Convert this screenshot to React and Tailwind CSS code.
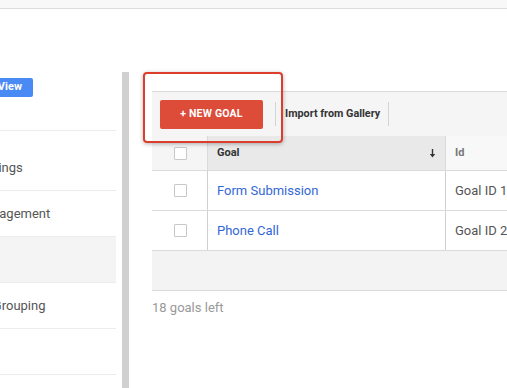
import React from 'react';

const navItems = [
  { label: 'View Settings' },
  { label: 'User Management' },
  { label: 'Goals', active: true },
  { label: 'Content Grouping' },
  { label: 'Filters' },
];

const goals = [
  { name: 'Form Submission', id: 'Goal ID 1' },
  { name: 'Phone Call', id: 'Goal ID 2' },
];

const Checkbox = () => (
  <div className="w-[13px] h-[13px] border border-[#c8c8c8] bg-white rounded-[1px]" />
);

const Sidebar = () => (
  <aside className="w-[116px] shrink-0 overflow-hidden">
    <div className="-ml-[56px] w-[172px] pt-[69px]">
      <div className="pl-[4px]">
        <button className="h-[19px] w-[85px] bg-[#4a8af4] rounded-[2px] text-white text-[11px] font-bold flex items-center justify-end pr-[11px] whitespace-nowrap">
          + Create View
        </button>
      </div>
      <div className="mt-[33px] border-b border-[#ececec]" />
      <div className="mt-[14px]">
        {navItems.map((item) => (
          <div
            key={item.label}
            className={`h-[46px] flex items-center border-b border-[#ececec] text-[13px] text-[#555] whitespace-nowrap ${
              item.active ? 'bg-[#f4f4f4]' : ''
            }`}
          >
            {item.label}
          </div>
        ))}
      </div>
    </div>
  </aside>
);

const Main = () => (
  <main className="relative flex-1 min-w-0 pl-[23px] pt-[82px]">
    <div className="h-[45px] border-t border-[#dadada] bg-[#f5f5f5] flex items-center pl-[8px]">
      <button className="w-[103px] h-[29px] bg-[#dd4b39] rounded-[2px] text-white text-[10.5px] font-bold tracking-[0.2px]">
        + NEW GOAL
      </button>
      <div className="ml-[12px] w-px h-[24px] bg-[#d4d4d4]" />
      <span className="ml-[9px] text-[10.8px] font-bold text-[#333] whitespace-nowrap">Import from Gallery</span>
      <div className="ml-[8px] w-px h-[24px] bg-[#d4d4d4]" />
    </div>

    <div className="flex h-[35px] border-b border-[#dadada] text-[11px]">
      <div className="w-[55px] shrink-0 bg-[#f5f5f5] flex items-center pl-[22px]">
        <Checkbox />
      </div>
      <div className="w-[238px] shrink-0 bg-[#e9e9e9] border-l border-[#dadada] flex items-center pl-[9px] pr-[9px] font-bold text-[#333]">
        <span className="flex-1">Goal</span>
        <svg width="7" height="9" viewBox="0 0 7 9">
          <path d="M3.5 0v6" stroke="#333" strokeWidth="1.4" />
          <path d="M0.8 5h5.4L3.5 8.5z" fill="#333" />
        </svg>
      </div>
      <div className="flex-1 bg-[#f8f8f8] border-l border-[#dadada] flex items-center pl-[9px] font-bold text-[#777] whitespace-nowrap">
        Id
      </div>
    </div>

    {goals.map((g) => (
      <div key={g.id} className="flex h-[40px] border-b border-[#dadada] bg-white text-[13px]">
        <div className="w-[55px] shrink-0 flex items-center pl-[22px]">
          <Checkbox />
        </div>
        <div className="w-[238px] shrink-0 border-l border-[#d0d0d0] flex items-center pl-[9px] text-[#3367d6]">
          {g.name}
        </div>
        <div className="flex-1 border-l border-[#d0d0d0] flex items-center pl-[9px] text-[#555] whitespace-nowrap">
          {g.id}
        </div>
      </div>
    ))}

    <div className="h-[40px] bg-[#f3f3f3] border-b border-[#dadada]" />
    <div className="mt-[7px] text-[13px] text-[#999]">18 goals left</div>

    <div className="absolute left-[14px] top-[63px] w-[140px] h-[71px] border-2 border-[#dc3d2c] rounded-[4px] shadow-[0_1px_4px_rgba(0,0,0,0.3)]" />
  </main>
);

export default function App() {
  return (
    <div className="w-[507px] h-[388px] overflow-hidden bg-white font-['Roboto',sans-serif]">
      <div className="h-[9px] bg-[#f8f8f8] border-b border-[#dcdcdc]" />
      <div className="flex h-[379px]">
        <Sidebar />
        <div className="ml-[6px] mt-[63px] w-[7px] shrink-0 bg-[#d0d0d0]" />
        <Main />
      </div>
    </div>
  );
}
